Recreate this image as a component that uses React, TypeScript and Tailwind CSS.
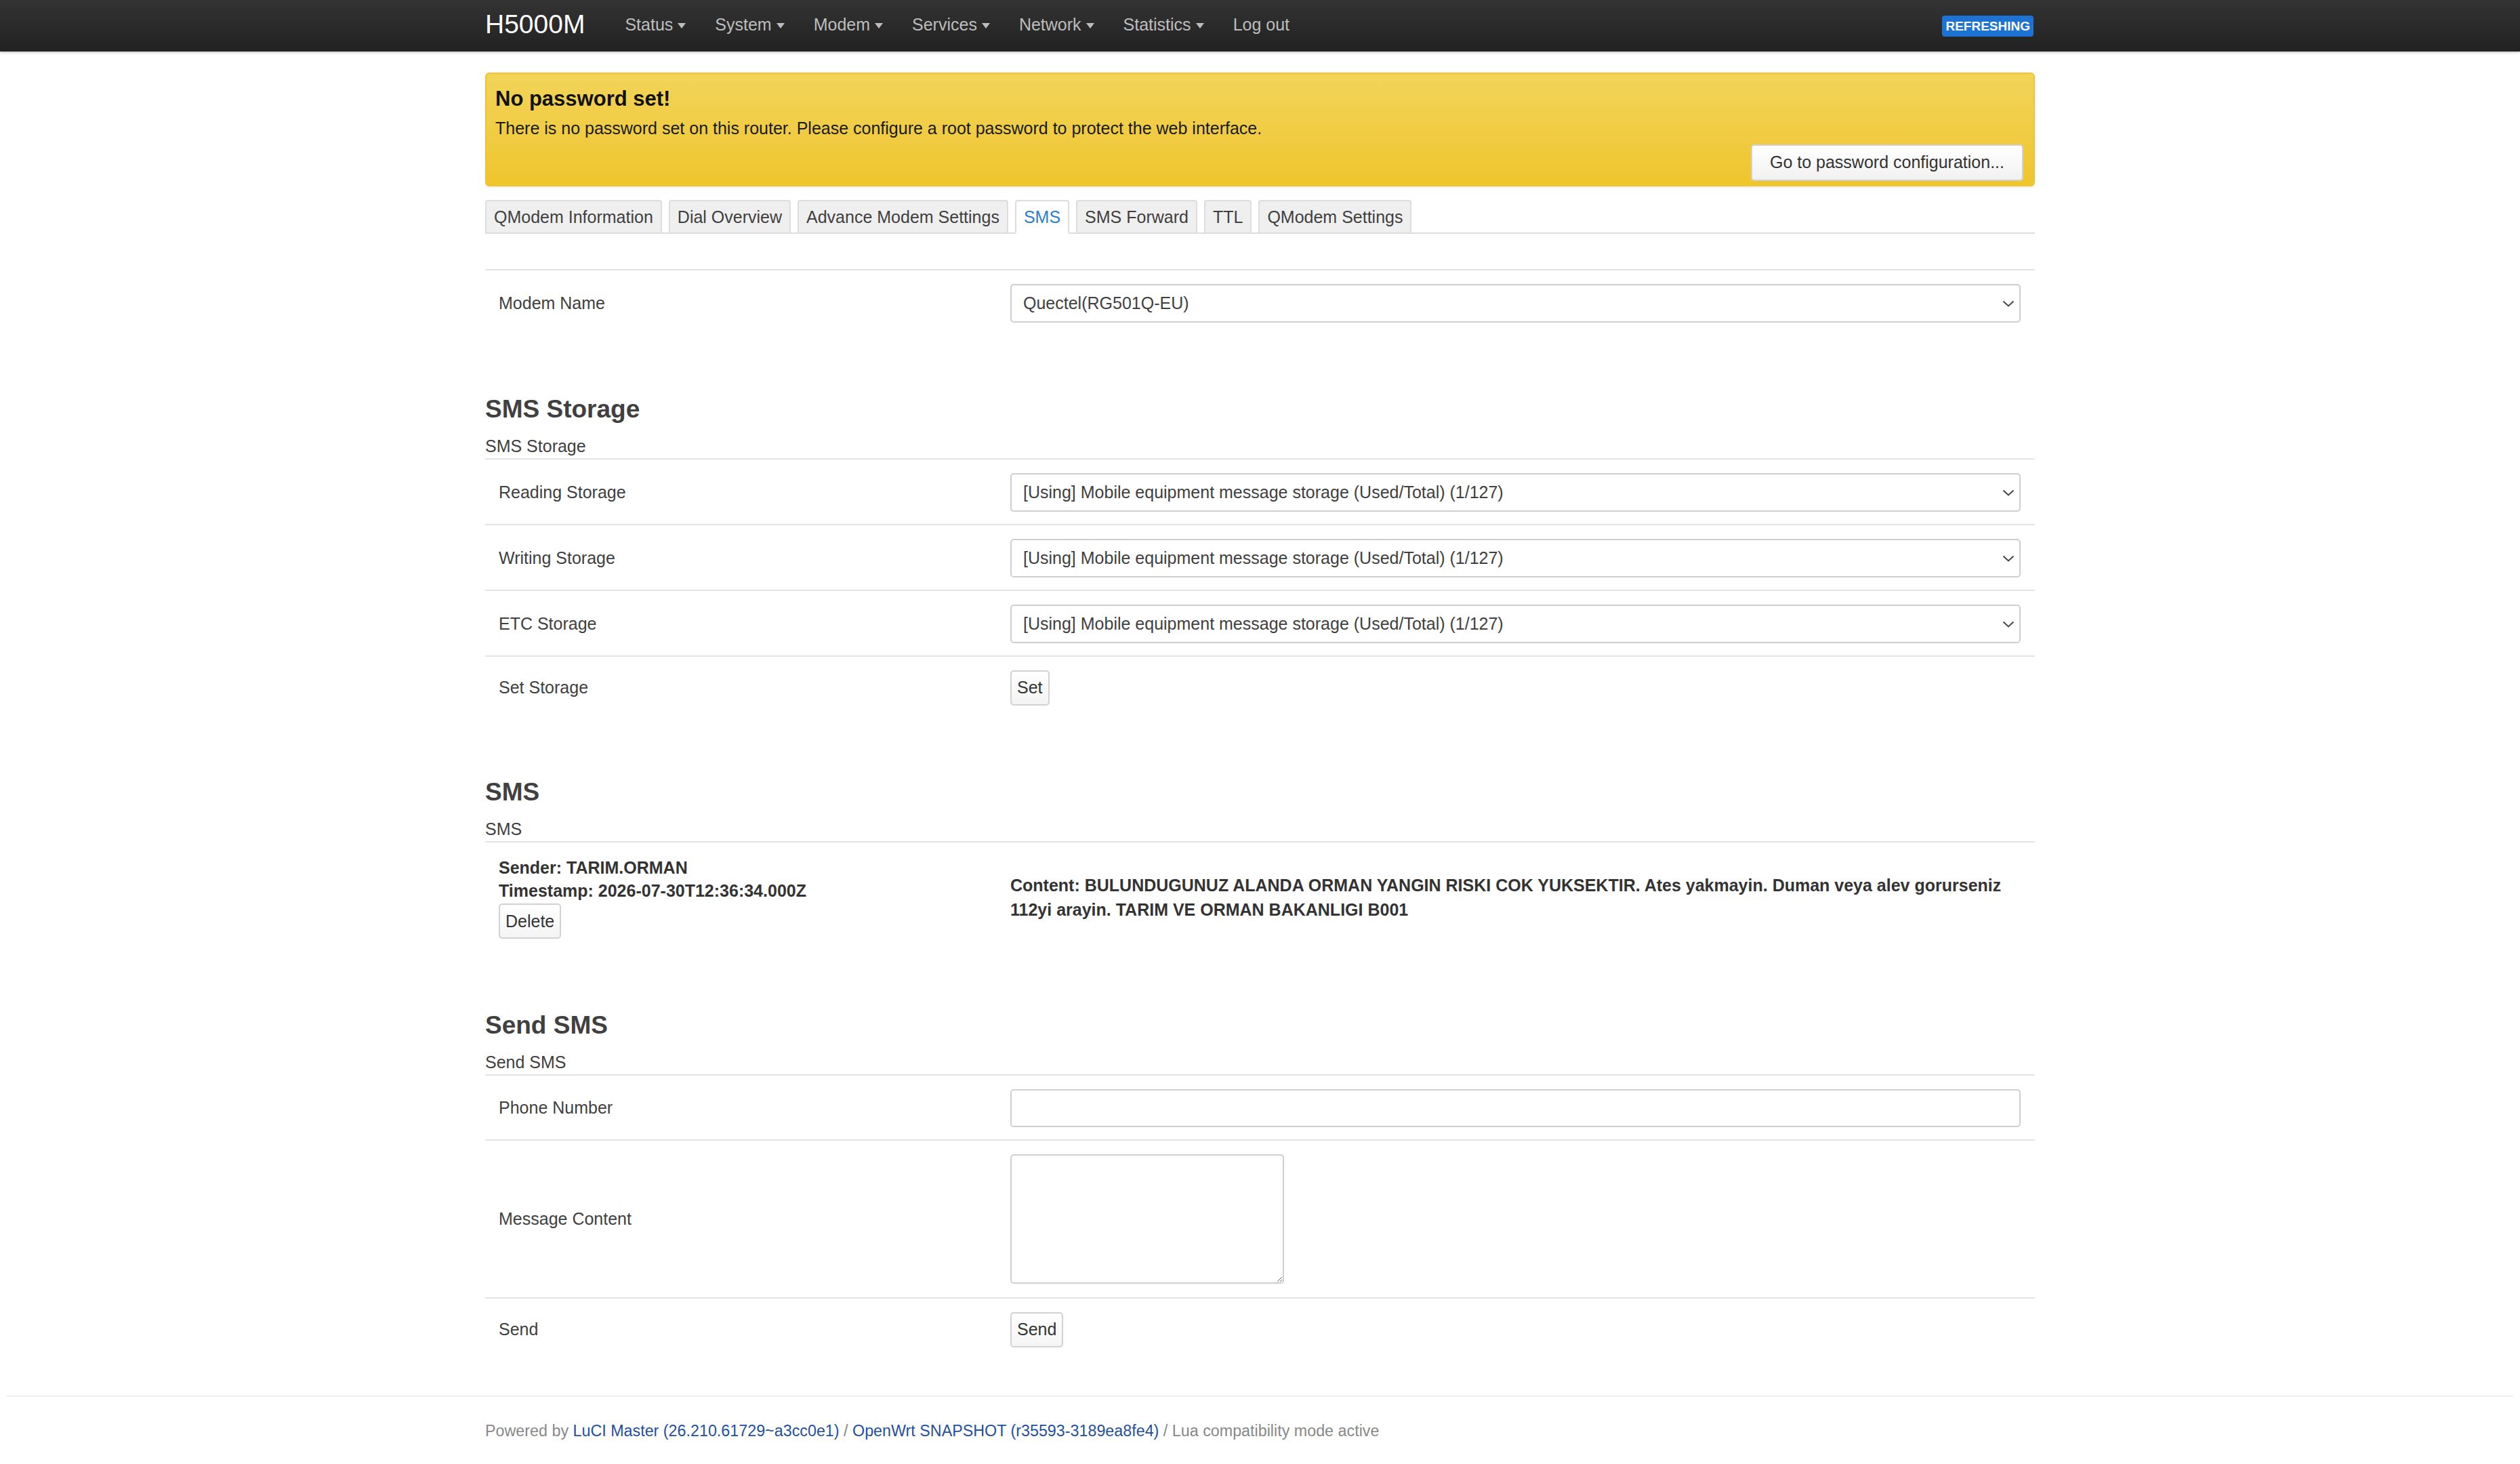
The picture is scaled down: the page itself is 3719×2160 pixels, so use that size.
import React from "react";

const FONT = { fontFamily: '"Liberation Sans", Arial, Helvetica, sans-serif' };

const NAV = ["Status", "System", "Modem", "Services", "Network", "Statistics"];
const TABS = ["QModem Information", "Dial Overview", "Advance Modem Settings", "SMS", "SMS Forward", "TTL", "QModem Settings"];
const STORAGE = "[Using] Mobile equipment message storage (Used/Total) (1/127)";

function Caret() {
  return <span className="ml-[7px] inline-block h-0 w-0 translate-y-[1px] border-x-[6px] border-t-[8px] border-x-transparent border-t-[#bdbdbd]" />;
}

function Select({ value }: { value: string }) {
  return (
    <div className="flex h-[57px] items-center justify-between rounded-[5px] border-2 border-[#cfcfcf] bg-white pl-[17px] pr-[7px] text-[25px] text-[#404040]">
      <span>{value}</span>
      <svg width="18" height="10" viewBox="0 0 18 10" fill="none">
        <path d="M1.5 1.5 L9 8.5 L16.5 1.5" stroke="#444" strokeWidth="2" />
      </svg>
    </div>
  );
}

function Btn({ children }: { children: React.ReactNode }) {
  return (
    <button className="h-[52px] rounded-[5px] border-2 border-[#d2d2d2] bg-gradient-to-b from-white to-[#f4f4f4] px-[8px] text-[25px] text-[#333]">
      {children}
    </button>
  );
}

function Row({ label, children, pb = "pb-[18px]" }: { label: string; children: React.ReactNode; pb?: string }) {
  return (
    <div className={`grid grid-cols-[755px_1fr] items-center border-t-2 border-[#e4e4e4] pl-[20px] pr-[21px] pt-[20px] ${pb}`}>
      <div className="text-[25px] text-[#404040]">{label}</div>
      <div>{children}</div>
    </div>
  );
}

function SectionHead({ title }: { title: string }) {
  return (
    <div className="mt-[89px]">
      <h3 className="text-[37px] font-bold leading-[42px] text-[#404040]">{title}</h3>
      <div className="mt-[18px] pb-[3px] text-[25px] leading-[30px] text-[#404040]">{title}</div>
    </div>
  );
}

export default function App() {
  return (
    <div className="min-h-[2160px] bg-white text-[#404040]" style={FONT}>
      {/* top bar */}
      <div className="h-[76px] bg-gradient-to-b from-[#333333] to-[#222222] shadow-[0_2px_3px_rgba(0,0,0,0.2)]">
        <div className="mx-auto flex h-full w-[2287px] items-center">
          <span className="pb-[6px] text-[39px] leading-none text-white">H5000M</span>
          <nav className="ml-[59px] flex items-center gap-[43px] pb-[2px] text-[25px] text-[#bdbdbd]">
            {NAV.map((n) => (
              <span key={n} className="flex items-center">
                {n}
                <Caret />
              </span>
            ))}
            <span>Log out</span>
          </nav>
          <span className="ml-auto mr-[2px] rounded-[4px] bg-[#1d73d3] px-[5px] py-[5px] text-[19px] font-bold leading-[21px] text-white">
            REFRESHING
          </span>
        </div>
      </div>

      <div className="mx-auto w-[2287px]">
        {/* alert */}
        <div className="mt-[31px] rounded-[6px] border-2 border-[#eec433] bg-gradient-to-b from-[#f2d458] to-[#efc52b] pt-[19px] pb-[6px] pl-[13px] pr-[15px] shadow-[0_2px_3px_rgba(0,0,0,0.08)]">
          <h4 className="text-[31px] font-bold leading-[36px] text-[#111]">No password set!</h4>
          <p className="mt-[9px] text-[25px] leading-[32px] text-[#1a1a1a]">
            There is no password set on this router. Please configure a root password to protect the web interface.
          </p>
          <div className="mt-[8px] flex justify-end">
            <button className="h-[54px] rounded-[5px] border-2 border-[#d0d0d0] bg-gradient-to-b from-white to-[#f1f1f1] px-[26px] text-[25px] text-[#333]">
              Go to password configuration...
            </button>
          </div>
        </div>

        {/* tabs */}
        <div className="mt-[20px] flex gap-[10px] border-b-2 border-[#dddddd]">
          {TABS.map((t) => (
            <div
              key={t}
              className={`-mb-[2px] h-[50px] rounded-t-[4px] border-2 px-[11px] pt-[8px] text-[25px] leading-[30px] ${
                t === "SMS"
                  ? "border-[#dddddd] border-b-white bg-white text-[#2a7ed0]"
                  : "border-[#dddddd] bg-[#efefef] text-[#404040]"
              }`}
            >
              {t}
            </div>
          ))}
        </div>

        {/* modem */}
        <div className="mt-[52px]">
          <Row label="Modem Name">
            <Select value="Quectel(RG501Q-EU)" />
          </Row>
        </div>

        {/* storage */}
        <SectionHead title="SMS Storage" />
        <Row label="Reading Storage">
          <Select value={STORAGE} />
        </Row>
        <Row label="Writing Storage">
          <Select value={STORAGE} />
        </Row>
        <Row label="ETC Storage">
          <Select value={STORAGE} />
        </Row>
        <Row label="Set Storage">
          <div>
            <Btn>Set</Btn>
          </div>
        </Row>

        {/* sms list */}
        <SectionHead title="SMS" />
        <div className="grid grid-cols-[755px_1fr] items-center border-t-2 border-[#e4e4e4] pl-[20px] pr-[21px] pt-[20px] pb-[18px]">
          <div className="text-[25px] font-bold leading-[34px] text-[#333]">
            <div>Sender: TARIM.ORMAN</div>
            <div>Timestamp: 2026-07-30T12:36:34.000Z</div>
            <div className="mt-[2px] font-normal">
              <Btn>Delete</Btn>
            </div>
          </div>
          <div className="text-[25px] font-bold leading-[36px] text-[#333]">
            Content: BULUNDUGUNUZ ALANDA ORMAN YANGIN RISKI COK YUKSEKTIR. Ates yakmayin. Duman veya alev gorurseniz 112yi arayin. TARIM VE ORMAN BAKANLIGI B001
          </div>
        </div>

        {/* send */}
        <SectionHead title="Send SMS" />
        <Row label="Phone Number">
          <input className="block h-[56px] w-full rounded-[5px] border-2 border-[#cfcfcf] px-[17px] text-[25px] outline-none" />
        </Row>
        <Row label="Message Content" pb="pb-[20px]">
          <textarea className="block h-[191px] w-[404px] rounded-[5px] border-2 border-[#cfcfcf] px-[8px] text-[25px] outline-none" />
        </Row>
        <Row label="Send" pb="pb-[19px]">
          <div>
            <Btn>Send</Btn>
          </div>
        </Row>
      </div>

      {/* footer */}
      <div className="mx-[10px] mt-[52px] border-t-2 border-[#eeeeee]">
        <div className="mx-auto w-[2287px] pt-[35px] text-[23.3px] leading-[30px] text-[#888]">
          Powered by <a className="text-[#1f4fa3]">LuCI Master (26.210.61729~a3cc0e1)</a> /{" "}
          <a className="text-[#1f4fa3]">OpenWrt SNAPSHOT (r35593-3189ea8fe4)</a> / Lua compatibility mode active
        </div>
      </div>
    </div>
  );
}
